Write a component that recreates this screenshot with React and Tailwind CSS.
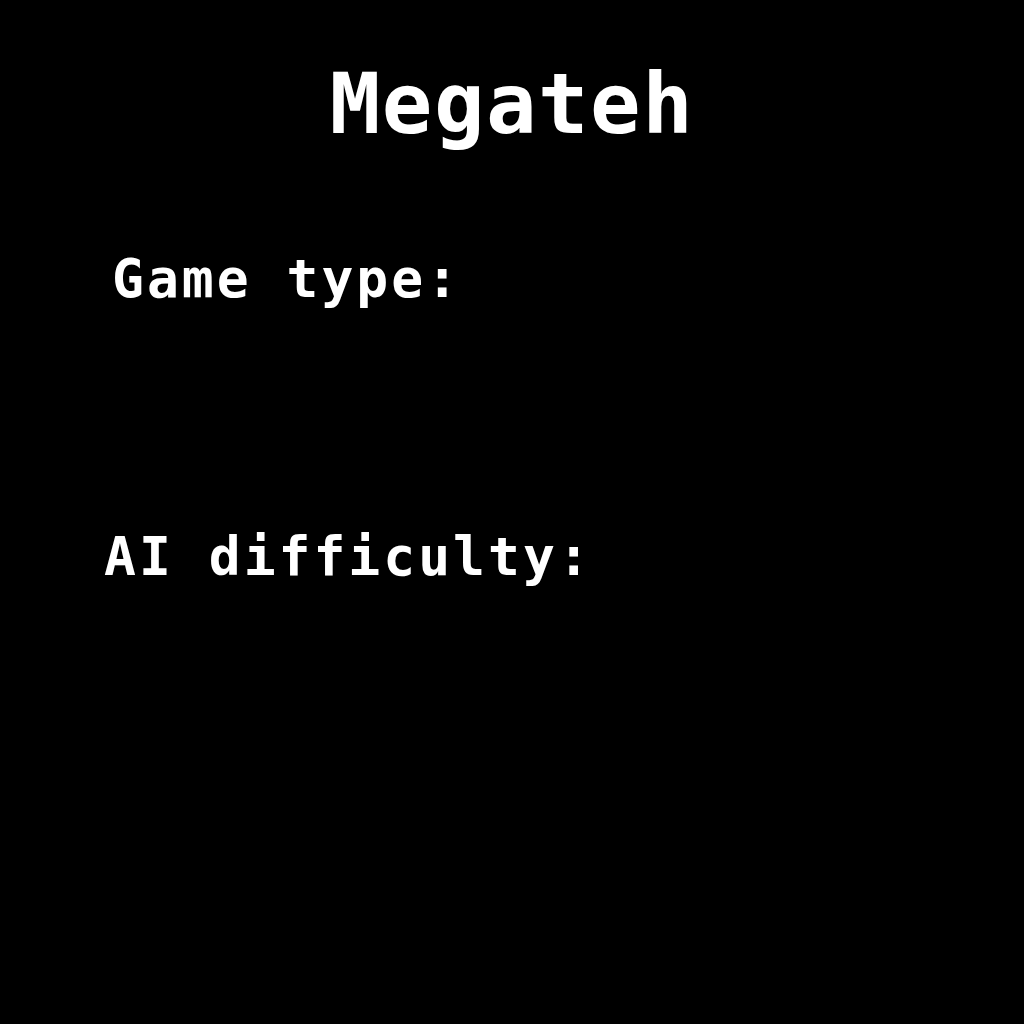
import React from 'react';

export default function App() {
    return (
        <div
            className="w-[1024px] h-[1024px] bg-black text-white flex flex-col"
            style={{ fontFamily: '"DejaVu Sans Mono", "Liberation Mono", monospace' }}
        >
            <h1 className="mt-[62px] text-center text-[84px] leading-none font-bold tracking-[1.5px]">Megateh</h1>

            <div className="mt-[106px] pl-[112px] text-[53px] leading-none font-bold tracking-[3px]">Game type:</div>

            <div className="mt-[225px] pl-[104px] text-[53px] leading-none font-bold tracking-[3px]">AI difficulty:</div>
        </div>
    );
}
